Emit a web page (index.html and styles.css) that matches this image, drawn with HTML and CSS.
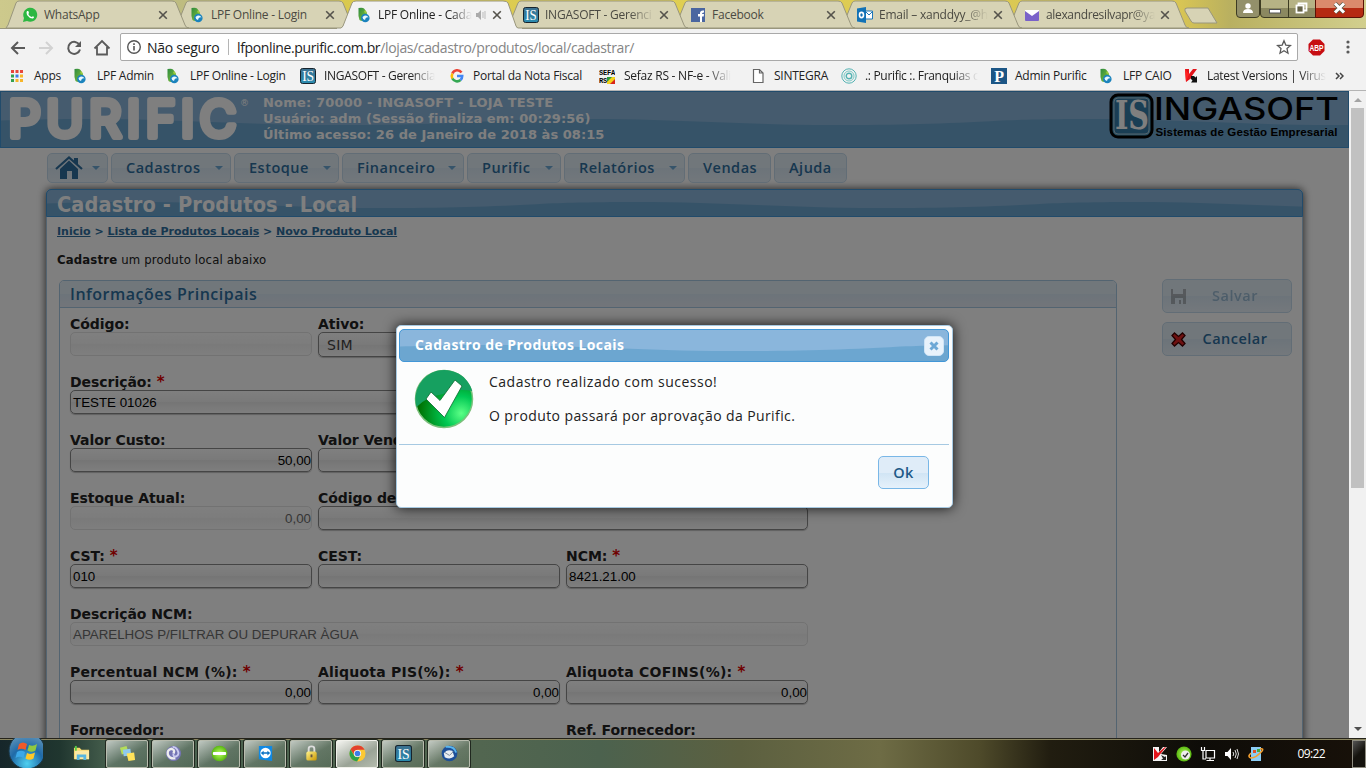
FILE: index.html
```html
<!DOCTYPE html>
<html lang="pt-BR">
<head>
<meta charset="utf-8">
<title>LPF Online - Cadastro</title>
<link rel="stylesheet" href="styles.css">
</head>
<body>
<svg class="defs" aria-hidden="true">
  <defs>
    <linearGradient id="leaf" x1="0" y1="0" x2="1" y2="1"><stop offset="0" stop-color="#2c8a3e"/><stop offset="1" stop-color="#8cc63c"/></linearGradient>
    <linearGradient id="isg" x1="0" y1="0" x2="0" y2="1"><stop offset="0" stop-color="#3b6f8e"/><stop offset="1" stop-color="#2a8cb0"/></linearGradient>
    <radialGradient id="orb" cx=".5" cy=".85" r=".9"><stop offset="0" stop-color="#4fd0f0"/><stop offset=".5" stop-color="#1f6aa8"/><stop offset="1" stop-color="#6d9cbc"/></radialGradient>
    <radialGradient id="ok" cx=".8" cy=".75" r=".75"><stop offset="0" stop-color="#5cff86"/><stop offset=".4" stop-color="#00c853"/><stop offset="1" stop-color="#007000"/></radialGradient>
    <radialGradient id="lime" cx=".5" cy=".5" r=".6"><stop offset="0" stop-color="#b8ff60"/><stop offset="1" stop-color="#45a800"/></radialGradient>
    <linearGradient id="gold" x1="0" y1="0" x2="1" y2="1"><stop offset="0" stop-color="#fff38a"/><stop offset="1" stop-color="#c99500"/></linearGradient>
  </defs>
  <symbol id="i-lpf" viewBox="0 0 16 16"><path d="M2.500 1Q7 0 8.500 2L11 6L10 13Q6 15 3.500 13L2.500 9Z" fill="url(#leaf)"/><path d="M9 3Q11 4 10.500 7L8 5Z" fill="#9ccc3c"/><circle cx="9.300" cy="11" r="4.300" fill="#1b83bd"/><path d="M6.500 10Q10.500 7 12.500 10.500Q9.500 9.500 9 13Q6.500 12.500 6.500 10Z" fill="#e8f8ff"/></symbol>
  <symbol id="i-is" viewBox="0 0 16 16"><rect x=".5" y=".5" width="15" height="15" rx="2" fill="url(#isg)" stroke="#16242e"/><text x="8" y="13" text-anchor="middle" textLength="11.5" lengthAdjust="spacingAndGlyphs" font-family="Liberation Serif" font-size="14" fill="#fff">IS</text></symbol>
  <symbol id="i-x" viewBox="0 0 10 10"><path d="M1.200 1.200L8.800 8.800M8.800 1.200L1.200 8.800" stroke="#55534c" stroke-width="1.600"/></symbol>
  <symbol id="i-k" viewBox="0 0 16 16"><path d="M2 1H6L6 6L10 1H14L8.500 8.500V10L3 14Z" fill="#e3141b"/><path d="M2 1L6 6L3 14Z" fill="#f22"/><path d="M8 8H11L12.500 9.500L14 8V14.500H8L9.500 12.500L8 11Z" fill="#111"/></symbol>
</svg>

<header class="browser">
  <div class="tabstrip">
    <svg class="tabshapes" width="1366" height="29" viewBox="0 0 1366 29">
      <g fill="#d7d3b5" stroke="#99967d">
        <path d="M1006 28L1010 25L1019 3Q1020 1 1022 1H1172Q1175 1 1176 3L1185 25Q1186 28 1189 28Z"/>
        <path d="M839 28L843 25L852 3Q853 1 855 1H1005Q1008 1 1009 3L1018 25Q1019 28 1022 28Z"/>
        <path d="M672 28L676 25L685 3Q686 1 688 1H838Q841 1 842 3L851 25Q852 28 855 28Z"/>
        <path d="M505 28L509 25L518 3Q519 1 521 1H671Q674 1 675 3L684 25Q685 28 688 28Z"/>
        <path d="M173 28L177 25L186 3Q187 1 189 1H339Q342 1 343 3L352 25Q353 28 356 28Z"/>
        <path d="M6 28L8 25L16 3Q17 1 19 1H172Q175 1 176 3L185 25Q186 28 189 28Z"/>
        <path d="M1187 8H1208L1217 23H1194Q1192 23 1191 21L1185 11Q1184 8 1187 8Z"/>
      </g>
      <path d="M0 28.500H1366" stroke="#99967d"/>
      <path d="M338 30Q342 28 343 26L352 3Q353 1 356 1H503Q507 1 508 3L516 26Q517 28 520 30Z" fill="#f2f2f2" stroke="#99967d"/>
      <path d="M337 29.500H522" stroke="#f2f2f2" stroke-width="2"/>
    </svg>
    <div class="tabs">
      <div class="tab"><svg class="fav" viewBox="0 0 16 16"><path d="M1 15L2 11A7 7 0 1 1 5 14Z" fill="#2db742"/><path d="M5 4Q4 5 5 8Q8 12 11 11.500Q13 10 11 9.200L9.500 10Q7 9 6.300 7L7 6L6.300 4Z" fill="#fff"/></svg><span>WhatsApp</span><svg class="cl"><use href="#i-x"/></svg></div>
      <div class="tab"><svg class="fav"><use href="#i-lpf"/></svg><span>LPF Online - Login</span><svg class="cl"><use href="#i-x"/></svg></div>
      <div class="tab active"><svg class="fav"><use href="#i-lpf"/></svg><span class="fade">LPF Online - Cada</span><svg class="snd" viewBox="0 0 12 12"><path d="M1 4H3L6 1V11L3 8H1Z" fill="#aaa"/><path d="M8 3V9M10 2V10" stroke="#bbb"/></svg><svg class="cl"><use href="#i-x"/></svg></div>
      <div class="tab"><svg class="fav"><use href="#i-is"/></svg><span class="fade">INGASOFT - Gerenci</span><svg class="cl"><use href="#i-x"/></svg></div>
      <div class="tab"><svg class="fav" viewBox="0 0 16 16"><path d="M1 1H15V15H1Z" fill="#4a66a0"/><path d="M10 15V9.500H8V7H10Q9.500 3 14 3.500V5.500Q12 5.300 12 7H14L13.700 9.500H12V15Z" fill="#fff"/></svg><span>Facebook</span><svg class="cl"><use href="#i-x"/></svg></div>
      <div class="tab"><svg class="fav" viewBox="0 0 16 16"><path d="M8 4H15.500V12H8Z" fill="#fff" stroke="#1e77b8"/><path d="M9 5L12 8L16 4" fill="none" stroke="#1e77b8"/><path d="M0 1.500L9 0V16L0 14.500Z" fill="#1272b6"/><ellipse cx="4.500" cy="8" rx="2" ry="2.600" fill="none" stroke="#fff" stroke-width="1.600"/></svg><span class="fade">Email – xanddyy_@h</span><svg class="cl"><use href="#i-x"/></svg></div>
      <div class="tab"><svg class="fav" viewBox="0 0 16 16"><rect x="1" y="3" width="14" height="11" rx="1" fill="#7a62c9"/><path d="M1 4L8 9L15 4V3H1Z" fill="#fff"/></svg><span class="fade last">alexandresilvapr@ya</span><svg class="cl"><use href="#i-x"/></svg></div>
    </div>
    <svg class="winctl" width="129" height="19" viewBox="0 0 129 19">
      <path d="M.5-2V14Q.5 17.500 4 17.500H19Q23.500 17.500 23.500 14V-2" fill="#93906a" stroke="#3d3b22"/>
      <circle cx="12" cy="6" r="2.700" fill="#fff"/><path d="M7 13Q7 9 12 9T17 13Z" fill="#fff"/>
      <path d="M24.500-2V14Q24.500 17.500 28 17.500H80V-2Z" fill="#8b8860" stroke="#3d3b22"/>
      <path d="M25 0H80V8H25Z" fill="#d3cf9f" opacity=".6"/><path d="M52.500 0V17" stroke="#3d3b22"/>
      <rect x="33.500" y="9.500" width="11" height="3.500" fill="#fff" stroke="#555"/>
      <path d="M62.500 3.500H70.500V10.500H62.500Z" fill="none" stroke="#fff" stroke-width="1.800"/><rect x="60.500" y="5.500" width="7" height="7" fill="#666348" stroke="#fff" stroke-width="1.800"/>
      <path d="M79.500-2V17.500H124Q127.500 17.500 127.500 14V-2Z" fill="#b52a12" stroke="#5a1206"/><path d="M80 0H127V8H80Z" fill="#db8a6c"/>
      <path d="M99 3.500L108 12.500M108 3.500L99 12.500" stroke="#554" stroke-width="4.500"/><path d="M99 3.500L108 12.500M108 3.500L99 12.500" stroke="#fff" stroke-width="3"/>
    </svg>
  </div>

  <div class="toolbar">
    <svg width="120" height="33" viewBox="0 0 120 33" fill="none" stroke="#5a5a5a" stroke-width="2">
      <path d="M25 18H12M18 12L12 18L18 24"/><path d="M39 18H52M46 12L52 18L46 24" stroke="#d2d2d2"/>
      <path d="M79.500 15A6 6 0 1 0 80 19.500"/><path d="M81 11V17H75Z" fill="#5a5a5a" stroke="none"/>
      <path d="M94.500 18.500L102 11L109.500 18.500M97 17V24.500H107V17" stroke-width="1.800"/>
    </svg>
    <div class="omni">
      <svg width="16" height="16" viewBox="0 0 16 16"><circle cx="8" cy="8" r="6.300" fill="none" stroke="#555" stroke-width="1.400"/><path d="M8 7V11.500M8 4.200V5.900" stroke="#555" stroke-width="1.600"/></svg>
      <span class="insec">Não seguro</span><i></i>
      <span class="url">lfponline.purific.com.br<em>/lojas/cadastro/produtos/local/cadastrar/</em></span>
      <svg class="star" width="16" height="16" viewBox="0 0 16 16"><path d="M8 1.800L9.800 6.100L14.500 6.500L11 9.600L12 14.200L8 11.800L4 14.200L5 9.600L1.500 6.500L6.200 6.100Z" fill="none" stroke="#5a5a5a" stroke-width="1.300"/></svg>
    </div>
    <svg class="abp" width="17" height="17" viewBox="0 0 17 17"><path d="M5 .5H12L16.500 5V12L12 16.500H5L.5 12V5Z" fill="#c70d12"/><text x="8.500" y="11.500" text-anchor="middle" textLength="14" lengthAdjust="spacingAndGlyphs" font-family="Liberation Sans" font-weight="700" font-size="8.500" fill="#fff">ABP</text></svg>
    <svg class="dots" width="4" height="16" viewBox="0 0 4 16" fill="#5a5a5a"><circle cx="2" cy="3" r="1.600"/><circle cx="2" cy="8" r="1.600"/><circle cx="2" cy="13" r="1.600"/></svg>
  </div>

  <nav class="bookmarks">
    <a class="bm b1"><svg viewBox="0 0 16 16"><path d="M2 2H5V5H2ZM6.500 2H9.500V5H6.500ZM11 2H14V5H11Z" fill="#e8453c"/><path d="M2 6.500H5V9.500H2Z" fill="#34a050"/><path d="M6.500 6.500H9.500V9.500H6.500Z" fill="#3d7be8"/><path d="M11 6.500H14V9.500H11Z" fill="#f7b529"/><path d="M2 11H5V14H2Z" fill="#34a050"/><path d="M6.500 11H9.500V14H6.500ZM11 11H14V14H11Z" fill="#f7b529"/></svg><span>Apps</span></a>
    <a class="bm b2"><svg><use href="#i-lpf"/></svg><span>LPF Admin</span></a>
    <a class="bm b3"><svg><use href="#i-lpf"/></svg><span>LPF Online - Login</span></a>
    <a class="bm b4"><svg><use href="#i-is"/></svg><span class="fade">INGASOFT - Gerencia</span></a>
    <a class="bm b5"><svg viewBox="0 0 16 16" fill="none" stroke-width="2.600"><path d="M12.500 4.500A5.200 5.200 0 0 0 3.400 5.500" stroke="#ea4335"/><path d="M3.400 5.500A5.200 5.200 0 0 0 3.400 10.500" stroke="#fbbc05"/><path d="M3.400 10.500A5.200 5.200 0 0 0 11.500 12" stroke="#34a853"/><path d="M11.500 12Q13.200 10.500 13.200 8H8" stroke="#4285f4"/></svg><span>Portal da Nota Fiscal</span></a>
    <a class="bm b6"><svg viewBox="0 0 16 16"><text x="0" y="7" textLength="16" lengthAdjust="spacingAndGlyphs" font-family="Liberation Mono" font-weight="700" font-size="8">SEFA</text><text x="0" y="15" textLength="8" lengthAdjust="spacingAndGlyphs" font-family="Liberation Mono" font-weight="700" font-size="8">RS</text><path d="M8 9H16L8 16Z" fill="#2a9a3a"/><path d="M16 9V16H8Z" fill="#d8251c"/><path d="M13 9H16V11L11 16H8V14Z" fill="#f4d21c"/></svg><span class="fade">Sefaz RS - NF-e - Vali</span></a>
    <a class="bm b7"><svg viewBox="0 0 16 16"><path d="M3.500 1.500H9.500L13 5V14.500H3.500ZM9.500 1.500V5H13" fill="#fff" stroke="#666" stroke-width="1.200"/></svg><span>SINTEGRA</span></a>
    <a class="bm b8"><svg viewBox="0 0 16 16" fill="none" stroke="#55b3b3"><circle cx="8" cy="8" r="7.200"/><circle cx="8" cy="8" r="5" stroke="#7cc8c4"/><circle cx="8" cy="8" r="2.800" stroke-width="1.400"/></svg><span class="fade">.: Purific :. Franquias c</span></a>
    <a class="bm b9"><svg viewBox="0 0 16 16"><path d="M0 0H16V16H0Z" fill="#1c5686"/><text x="8" y="13.500" text-anchor="middle" font-family="Liberation Serif" font-weight="700" font-size="16" fill="#fff">P</text></svg><span>Admin Purific</span></a>
    <a class="bm b10"><svg><use href="#i-lpf"/></svg><span>LFP CAIO</span></a>
    <a class="bm b11"><svg><use href="#i-k"/></svg><span class="fade">Latest Versions | Virus</span></a>
    <a class="more"><svg width="9" height="8" viewBox="0 0 9 8" fill="none" stroke="#444" stroke-width="1.500"><path d="M1 1L4 4L1 7M5 1L8 4L5 7"/></svg></a>
  </nav>
</header>

<main class="view">
  <div class="page">
    <div class="top wave">
      <svg class="purific" width="244" height="55" viewBox="0 0 244 55"><text x="9.500" y="44.500" textLength="228" lengthAdjust="spacing" font-family="Inter" font-weight="400" font-size="50.500" fill="#fff" stroke="#fff" stroke-width="6" stroke-linejoin="round" stroke-linecap="round">PURIFIC</text></svg>
      <span class="reg">®</span>
      <div class="who"><p class="w1">Nome: 70000 - INGASOFT - LOJA TESTE</p><p class="w2">Usuário: adm (Sessão finaliza em: 00:29:56)</p><p class="w3">Último acesso: 26 de Janeiro de 2018 às 08:15</p></div>
      <svg class="inga" width="232" height="48" viewBox="0 0 232 48">
        <rect x="2" y="3" width="41" height="42" rx="7" fill="#4a9cc4" stroke="#000" stroke-width="3"/>
        <rect x="5" y="6" width="35" height="36" rx="4" fill="#347ca8" stroke="#aac8d8"/>
        <text x="6" y="37" textLength="34" lengthAdjust="spacingAndGlyphs" font-family="DejaVu Serif" font-size="39" fill="#fff">IS</text>
        <text x="45" y="28" textLength="185" lengthAdjust="spacingAndGlyphs" font-family="Inter" font-weight="500" font-size="31" fill="#000">INGASOFT</text>
        <text x="46.500" y="44" textLength="182" font-family="Liberation Sans" font-weight="700" font-size="11.500" fill="#000">Sistemas de Gestão Empresarial</text>
      </svg>
    </div>

    <nav class="menu">
      <a class="m0"><svg width="28" height="24" viewBox="0 0 28 24"><path d="M14 4.500L23 13V23H17V15H12V23H5V13Z" fill="#2e6e9e"/><path d="M1 13L14 1.500L27 13" fill="none" stroke="#2e6e9e" stroke-width="2.200"/><path d="M19 2H23V9L19 6Z" fill="#2e6e9e"/></svg><b></b></a>
      <a class="m1"><span>Cadastros</span><b></b></a>
      <a class="m2"><span>Estoque</span><b></b></a>
      <a class="m3"><span>Financeiro</span><b></b></a>
      <a class="m4"><span>Purific</span><b></b></a>
      <a class="m5"><span>Relatórios</span><b></b></a>
      <a class="m6"><span>Vendas</span></a>
      <a class="m7"><span>Ajuda</span></a>
    </nav>

    <section class="panel">
      <h1 class="wave"><span>Cadastro - Produtos - Local</span></h1>
      <p class="crumbs"><a>Inicio</a> &gt; <a>Lista de Produtos Locais</a> &gt; <a>Novo Produto Local</a></p>
      <p class="lead"><b>Cadastre</b> um produto local abaixo</p>
      <div class="cols">
        <div class="box">
          <h2>Informações Principais</h2>
          <div class="form">
            <div class="f"><label>Código:</label><div class="in off"></div></div>
            <div class="f"><label>Ativo:</label><div class="in sel">SIM</div></div>
            <div class="f s3"><label>Descrição: <i>*</i></label><div class="in">TESTE 01026</div></div>
            <div class="f"><label>Valor Custo:</label><div class="in r">50,00</div></div>
            <div class="f"><label>Valor Venda:</label><div class="in"></div></div>
            <div class="f e"></div>
            <div class="f"><label>Estoque Atual:</label><div class="in r off">0,00</div></div>
            <div class="f s2"><label>Código de Barras:</label><div class="in"></div></div>
            <div class="f"><label>CST: <i>*</i></label><div class="in">010</div></div>
            <div class="f"><label>CEST:</label><div class="in"></div></div>
            <div class="f"><label>NCM: <i>*</i></label><div class="in">8421.21.00</div></div>
            <div class="f s3"><label>Descrição NCM:</label><div class="in off">APARELHOS P/FILTRAR OU DEPURAR ÀGUA</div></div>
            <div class="f"><label class="wide">Percentual NCM (%): <i>*</i></label><div class="in r">0,00</div></div>
            <div class="f"><label class="wide">Aliquota PIS(%): <i>*</i></label><div class="in r">0,00</div></div>
            <div class="f"><label class="wide">Aliquota COFINS(%): <i>*</i></label><div class="in r">0,00</div></div>
            <div class="f s2"><label>Fornecedor:</label></div>
            <div class="f"><label>Ref. Fornecedor:</label></div>
          </div>
        </div>
        <div class="acts">
          <button class="off"><svg width="15" height="15" viewBox="0 0 15 15"><path d="M0 0H2V5H12V0H15V15H12V9H4V15H0ZM8 11H10V15H8Z" fill="#555"/></svg><span>Salvar</span></button>
          <button><svg width="15" height="15" viewBox="0 0 15 15"><path d="M3.500 1L7.500 4.500L11.500 1L14 3.500L10.500 7.500L14 11.500L11.500 14L7.500 10.500L3.500 14L1 11.500L4.500 7.500L1 3.500Z" fill="#d22" stroke="#400" stroke-width="1.300"/></svg><span>Cancelar</span></button>
        </div>
      </div>
    </section>
    <div class="overlay"></div>

    <div class="dialog">
      <div class="dhead wave"><span>Cadastro de Produtos Locais</span>
        <svg width="20" height="20" viewBox="0 0 20 20"><rect x=".5" y=".5" width="19" height="19" rx="4.500" fill="#e8f2fb" stroke="#cfe4f5"/><path d="M6.500 6.500L13.500 13.500M13.500 6.500L6.500 13.500" stroke="#6da8d6" stroke-width="3"/></svg></div>
      <div class="dbody">
        <svg width="60" height="60" viewBox="0 0 60 60"><circle cx="30" cy="30" r="28.500" fill="url(#ok)" stroke="#7cc07c" stroke-width="1.500"/><path d="M2.500 38A28.300 28.300 0 1 1 58.300 22Q44 19 29 25Q12 28 2.500 38Z" fill="#16a060"/><path d="M12 30L17 23L26 31.500L41 11L48 17L30.500 48.500Z" fill="#fff" stroke="#0a6a30" stroke-width=".8"/></svg>
        <div><p class="p1">Cadastro realizado com sucesso!</p><p class="p2">O produto passará por aprovação da Purific.</p></div>
      </div>
      <div class="dfoot"><button>Ok</button></div>
    </div>
  </div>
  <div class="scroll"><b class="up"></b><div class="thumb"></div><b class="down"></b></div>
</main>

<footer class="task">
  <svg class="start" width="43" height="30" viewBox="0 0 43 30"><circle cx="27" cy="13" r="18" fill="url(#orb)" stroke="#1c3848"/><path d="M19 6Q23 3 27 6L25.500 12Q21.500 9.500 17.500 12Z" fill="#f05a28"/><path d="M29 7Q33 9 37 6L35.500 12.500Q31.500 15 27.500 12.500Z" fill="#90c840"/><path d="M17 14Q21 11.500 25 14L23.500 20Q19.500 17.500 15.500 20Z" fill="#3ca8e8"/><path d="M27 15Q31 17 35 14.500L33.500 20.500Q29.500 23 25.500 20.500Z" fill="#ffc828"/></svg>
  <div class="tb plain"><svg viewBox="0 0 18 18"><path d="M1 3H7L9 5H17V15H1Z" fill="#f7d76c"/><path d="M2 6H17V15H2Z" fill="#fbe9a4"/><path d="M4 16V10H14V16H11V13H7V16Z" fill="#58b6e0"/><path d="M3 1V6" stroke="#5c4" stroke-width="2"/></svg></div>
  <div class="tb"><svg viewBox="0 0 18 18"><path d="M1 3L8 1L10 8L3 10Z" fill="#b4dd58"/><path d="M4 5L12 4L13 11L5 12Z" fill="#8fc9ee"/><path d="M8 9L16 8L17 16L10 17Z" fill="#ffe35a"/></svg></div>
  <div class="tb"><svg viewBox="0 0 18 18" fill="none"><circle cx="9" cy="9" r="8" fill="#7474b4"/><path d="M9 9Q11 5 7 4Q2 5 3 10Q5 15 11 14" stroke="#eee" stroke-width="2.500"/><path d="M9 9Q8 13 12 12Q16 10 13 5Q11 2 8 2" stroke="#cbcbf0" stroke-width="2"/></svg></div>
  <div class="tb"><svg viewBox="0 0 18 18"><circle cx="9" cy="9" r="8.300" fill="url(#lime)"/><rect x="2" y="7.500" width="14" height="3" rx="1" fill="#fff"/></svg></div>
  <div class="tb"><svg viewBox="0 0 18 18"><path d="M2 1H16V17L2 15Z" fill="#1089e4"/><circle cx="9" cy="8.500" r="5.500" fill="#fff"/><path d="M4 8.500L7 6V7.700H11V6L14 8.500L11 11V9.300H7V11Z" fill="#0b72c4"/></svg></div>
  <div class="tb"><svg viewBox="0 0 18 18"><path d="M6 9V4Q6 1.500 9 1.500T12 4V9" fill="none" stroke="#ddd" stroke-width="2"/><rect x="3.500" y="7" width="11" height="9.500" rx="2" fill="url(#gold)"/><path d="M9 10V13" stroke="#654" stroke-width="2"/></svg></div>
  <div class="tb cur"><svg viewBox="0 0 18 18"><circle cx="9" cy="9" r="8.500" fill="#fcc934"/><path d="M1.600 4.800A8.500 8.500 0 0 1 16.600 5H9A4 4 0 0 0 5.200 10Z" fill="#e2402f"/><path d="M1.600 4.800A8.500 8.500 0 0 0 8.500 17.500L12.300 11A4 4 0 0 1 5.500 11Z" fill="#2ba24c"/><circle cx="9" cy="9" r="3.800" fill="#fff"/><circle cx="9" cy="9" r="3" fill="#3c7ee8"/></svg></div>
  <div class="tb"><svg><use href="#i-is"/></svg></div>
  <div class="tb"><svg viewBox="0 0 18 18"><circle cx="9" cy="9" r="8.300" fill="#1d4f98"/><path d="M5 2Q14 1 16 8" fill="none" stroke="#5ab6ee" stroke-width="2"/><path d="M3 9Q6 4 12 6L14 12Q10 16 4 13Z" fill="#e8edf2"/><path d="M4 8L9 11L13 7" stroke="#7a8898" fill="none"/></svg></div>
  <div class="tray">
    <svg width="16" height="16" viewBox="0 0 16 16"><path d="M1 1H7L7 6L11 1H15L9 8L15 9V15H1Z" fill="#f4f4f4"/><path d="M2 2L6 7L13 1H14L6 11L2 14Z" fill="#e3141b"/><path d="M9 9L13 11L14 10V14H9L11 12.500Z" fill="#222"/></svg>
    <svg width="16" height="16" viewBox="0 0 16 16"><circle cx="8" cy="8" r="7.600" fill="url(#lime)"/><circle cx="9.500" cy="9" r="4.500" fill="#eee"/><path d="M7 9L9 11L12 7" fill="none" stroke="#333" stroke-width="1.300"/></svg>
    <svg width="16" height="16" viewBox="0 0 16 16"><path d="M6 4.500H14.500V12H6ZM10 12V14.500M6.500 14.500H14M1.500 1V4.500H4.500V1M3 5V13H6" fill="none" stroke="#fff" stroke-width="1.200"/></svg>
    <svg width="16" height="16" viewBox="0 0 16 16"><path d="M1 6H3.500L7 2V14L3.500 10H1Z" fill="#fff"/><path d="M9 6Q10.500 8 9 10M11 4Q13.500 8 11 12M13 3Q16 8 13 13" fill="none" stroke="#ddd"/></svg>
    <svg width="16" height="16" viewBox="0 0 16 16"><path d="M3 1H13V15H3Z" fill="#8ccdf5"/><path d="M5 4H8V7H5Z" fill="#e05028"/><path d="M9 3H12V6H9Z" fill="#4a4"/><path d="M3 7Q-1 11 3 12Q8 12 14 5Q16 2 12 3" fill="none" stroke="#f4a030" stroke-width="1.600"/></svg>
  </div>
  <time>09:22</time>
  <div class="peek"></div>
</footer>
</body>
</html>
```
FILE: styles.css
```css
* { box-sizing: border-box; }
body { margin: 0; width: 1366px; height: 768px; overflow: hidden; display: flex; flex-direction: column; font-family: "Open Sans", sans-serif; }
p, h1, h2 { margin: 0; white-space: nowrap; }
.defs { position: absolute; width: 0; height: 0; }
svg { display: block; flex: none; }

/* Browser frame */
.browser { height: 91px; flex: none; background: #f2f2f2; border-bottom: 1px solid #b4b4b4; font-size: 12px; }
.tabstrip { position: relative; height: 29px; background: linear-gradient(90deg, #cdc98c 0, #bcbb83 170px, #d9c94e 340px, #e0cf52 700px, #d8c554 1180px, #b9b060 1230px, #d2cf8e); }
.tabshapes { position: absolute; left: 0; top: 0; }
.tabs { position: relative; display: flex; padding-left: 22px; }
.tab { width: 167px; height: 29px; display: flex; align-items: center; color: #4b4a42; padding-right: 21px; }
.tab.active { color: #222; }
.tab .fav { width: 16px; height: 16px; margin-right: 6px; }
.tab span { flex: 1; min-width: 0; overflow: hidden; white-space: nowrap; letter-spacing: -.23px; line-height: 20px; }
.tab span.last { letter-spacing: -.35px; }
.tab .cl { width: 10px; height: 10px; margin-left: 5px; }
.tab .snd { width: 12px; height: 12px; margin-left: 3px; }
.fade { -webkit-mask-image: linear-gradient(90deg, #000 78%, transparent); mask-image: linear-gradient(90deg, #000 78%, transparent); }
.winctl { position: absolute; left: 1236px; top: 0; }
.toolbar { height: 33px; display: flex; align-items: center; }
.toolbar > svg:first-child { margin-top: 1px; }
.omni { width: 1178px; height: 28px; margin-top: 3px; background: #fff; border: 1px solid #a9a9a9; border-radius: 2px; display: flex; align-items: center; padding-left: 5px; font-size: 14px; color: #222; letter-spacing: -.37px; }
.insec { margin-left: 5px; width: 72px; white-space: nowrap; letter-spacing: -.28px; }
.omni i { width: 1px; height: 16px; background: #b5b5b5; margin: 0 8px 0 9px; }
.url em { font-style: normal; color: #858585; }
.star { margin-left: auto; margin-right: 5px; }
.abp { margin: 3px 0 0 10px; }
.dots { margin: 3px 0 0 21px; }
.bookmarks { height: 28px; display: flex; align-items: center; padding-left: 9px; color: #222; }
.bm { display: flex; align-items: center; white-space: nowrap; letter-spacing: -.25px; }
.bm svg { width: 16px; height: 16px; margin-right: 9px; }
.bm span { line-height: 20px; }
.b1 { width: 63px; } .b2 { width: 93px; } .b3 { width: 135px; } .b4 { width: 149px; letter-spacing: -.32px; } .b4 svg, .b5 svg { margin-right: 8px; } .b5 { width: 150px; } .b6 { width: 151px; }
.b7 { width: 91px; } .b7 svg { margin-right: 8px; } .b8 { width: 150px; letter-spacing: -.32px; } .b8 svg, .b9 svg { margin-right: 8px; } .b9 { width: 107px; } .b10 { width: 85px; } .b11 { width: 152px; letter-spacing: -.3px; } .b11 svg { margin-right: 8px; }

/* Page */
.view { height: 647px; flex: none; display: flex; }
.page { position: relative; width: 1349px; height: 647px; overflow: hidden; background: #fff; }
.overlay { position: absolute; inset: 0; background: rgba(0,0,0,.5); }
.wave { border: 1px solid #4297d7; background: #6ca6d0 url("data:image/svg+xml,%3Csvg xmlns='http://www.w3.org/2000/svg' width='500' height='100'%3E%3Cpath d='M0 0H500V50.500C440 54 400 55 330 55C240 55 180 49 90 49C50 49 30 49.500 0 50.500Z' fill='%238ab6dc'/%3E%3C/svg%3E") 0 50% repeat-x; }
.top { height: 57px; display: flex; color: #fff; font: bold 13px/16px "DejaVu Sans", sans-serif; }
.purific { margin-left: -2px; }
.reg { width: 8px; margin-left: -3px; font-size: 9px; font-weight: 400; line-height: 22px; }
.who { margin: 3px 0 0 15px; width: 846px; }
.w1 { letter-spacing: .19px; }
.w2 { letter-spacing: .07px; }
.w3 { letter-spacing: .05px; }
.menu { height: 41px; padding: 5px 0 0 47px; display: flex; gap: 3px; font: 600 14.500px/26px "Open Sans", sans-serif; }
.menu a { height: 30px; border: 1px solid #c5dbec; border-radius: 5px; background: linear-gradient(#e3eef7 50%, #d9e8f4 50%, #e5eff8); color: #2e6e9e; display: flex; align-items: center; padding: 0 7px 0 14px; justify-content: space-between; letter-spacing: .5px; }
.menu svg { margin-left: -7px; }
.menu b { border: 4px solid transparent; border-top-color: #6da8d5; border-bottom: 0; }
.m0 { width: 61px; } .m1 { width: 120px; } .m2 { width: 105px; } .m3 { width: 122px; } .m4 { width: 94px; } .m5 { width: 121px; } .m6 { width: 83px; } .m7 { width: 73px; }
.panel { margin-left: 46px; width: 1257px; height: 600px; border: 1px solid #a6c9e2; border-radius: 5px 5px 0 0; box-shadow: 0 0 9px rgba(0,0,0,.75); }
.panel h1 { margin: -1px; height: 28px; border-radius: 5px 5px 0 0; padding-left: 10px; color: #fff; font: bold 21.500px/29px "DejaVu Sans Condensed", "DejaVu Sans", sans-serif; letter-spacing: .15px; }
.crumbs { margin: 8px 0 0 10px; font: bold 11px/16px "DejaVu Sans", sans-serif; color: #2e6e9e; }
.crumbs a { text-decoration: underline; }
.lead { margin: 12px 0 0 10px; font: 13px/16px "DejaVu Sans Condensed", "DejaVu Sans", sans-serif; color: #222; letter-spacing: .16px; }
.cols { display: flex; margin: 12px 0 0 12px; align-items: flex-start; }
.box { width: 1058px; height: 560px; border: 1px solid #a6c9e2; border-radius: 5px 5px 0 0; }
.box h2 { height: 27px; border-bottom: 1px solid #a6c9e2; padding-left: 10px; background: linear-gradient(#e3eef7 50%, #d9e8f4 50%, #e5ebf5); font: 600 16px/27px "Open Sans", sans-serif; letter-spacing: .5px; color: #2e6e9e; border-radius: 4px 4px 0 0; }
.form { padding: 7px 0 0 10px; display: grid; grid-template-columns: repeat(3, 242px); grid-auto-rows: 58px; column-gap: 6px; }
.s2 { grid-column: span 2; } .s3 { grid-column: 1 / span 3; }
.f label { display: block; height: 17px; font: bold 14px/19px "DejaVu Sans", sans-serif; color: #222; letter-spacing: -.05px; white-space: nowrap; }
.f label.wide { letter-spacing: .22px; }
.f label i { font-style: normal; color: #e00000; font-size: 15px; line-height: 1; }
.in { height: 24px; border: 1px solid #8a8a8a; border-radius: 5px; box-shadow: 0 1px 1px rgba(0,0,0,.25); background: linear-gradient(#fff, #f3f3f3 50%, #ebebeb 51%, #fdfdfd); padding: 0 2px; font: 13.333px/23px "Liberation Sans", sans-serif; color: #000; }
.in.r { text-align: right; padding-right: 0; }
.in.off { border-color: #e4e4e4; color: #6c6c6c; box-shadow: none; background: linear-gradient(#fff, #f9f9f9 50%, #f4f4f4 51%, #fdfdfd); }
.in.sel { height: 25px; padding-left: 8px; font: 14px/24px "DejaVu Sans", sans-serif; color: #444; letter-spacing: .3px; }
button { font: 600 14.500px/1 "Open Sans", sans-serif; color: #2e6e9e; border: 1px solid #c5dbec; border-radius: 5px; background: linear-gradient(#e3eef7 50%, #d9e8f4 50%, #e8f1f9); letter-spacing: .5px; padding: 0; }
.acts { margin: -1px 0 0 45px; display: grid; gap: 9px; }
.acts button { width: 130px; height: 34px; display: flex; align-items: center; padding: 0 7px 0 8px; }
.acts span { flex: 1; text-align: center; padding-top: 1px; }
.acts .off svg, .acts .off span { opacity: .38; }

/* Dialog */
.dialog { position: absolute; left: 396px; top: 234px; width: 557px; height: 183px; padding: 3px; background: #fcfdfd; border: 1px solid #a6c9e2; border-radius: 5px; box-shadow: 0 0 13px rgba(0,0,0,.85); margin: 0; }
.dhead { margin: 0 0 0 -1px; width: 550px; height: 33px; border-radius: 5px; display: flex; align-items: center; justify-content: space-between; padding: 0 4px 0 15px; color: #fff; font: bold 14px/29px "Open Sans", sans-serif; letter-spacing: .43px; }
.dhead span { padding-bottom: 2px; }
.dbody { height: 83px; margin: 0 0 0 -1px; border-bottom: 1px solid #a6c9e2; display: flex; padding: 7px 0 0 15px; font-size: 14px; line-height: 17px; color: #222; letter-spacing: .5px; }
.dbody > div { margin: 4px 0 0 15px; }
.p2 { margin-top: 17px; letter-spacing: .4px; }
.dfoot { display: flex; justify-content: flex-end; padding: 11px 20px 0 0; }
.dfoot button { width: 51px; height: 33px; padding-top: 2px; border-color: #79b7e7; background: linear-gradient(#dfecf8 50%, #d0e4f4 50%, #e5f1fb); color: #1d5987; }

.scroll { width: 17px; background: #f1f1f1; display: flex; flex-direction: column; align-items: center; }
.scroll b { border: 4px solid transparent; }
.up { margin-top: 3px; border-bottom-color: #a3a3a3 !important; }
.thumb { width: 13px; height: 380px; margin-top: 6px; background: #c1c1c1; }
.down { margin: auto 0 3px; border-top-color: #505050 !important; }

/* Taskbar */
.task { height: 30px; flex: none; display: flex; align-items: center; border-top: 1px solid #25231a; box-shadow: inset 0 1px 0 #8a8560; background: linear-gradient(90deg, #16262a 0, #20362f 60px, #47604e 110px, #526650 480px, #4c624e 600px, #5c6040 740px, #6e6c45 880px, #4e4a2a 980px, #211d10 1050px, #0e0c08 1200px, #181109); }
.start { align-self: flex-start; margin-top: -1px; }
.tb { width: 42px; height: 28px; margin-right: 4px; border: 1px solid #b8bcae; border-radius: 2px; box-shadow: 0 0 0 1px #20281f; background: linear-gradient(150deg, rgba(255,255,255,.65), rgba(255,255,255,.12) 55%, rgba(255,255,255,.05)); display: flex; align-items: center; justify-content: center; }
.tb svg { width: 17px; height: 17px; }
.tb.plain { border-color: transparent; background: none; box-shadow: none; margin: 0 4px 0 17px; }
.tb.cur { background: linear-gradient(150deg, #f4f4f0, #9aa396 60%, #b5bcae); border-color: #f0f0ea; }
.tray { display: flex; gap: 8px; margin-left: auto; }
.task time { color: #fff; font-size: 12px; letter-spacing: -.6px; margin: -1px 27px 0 33px; }
.peek { width: 14px; height: 28px; border: 1px solid #8e8c80; background: linear-gradient(135deg, #555, #15130e 50%); }
```
